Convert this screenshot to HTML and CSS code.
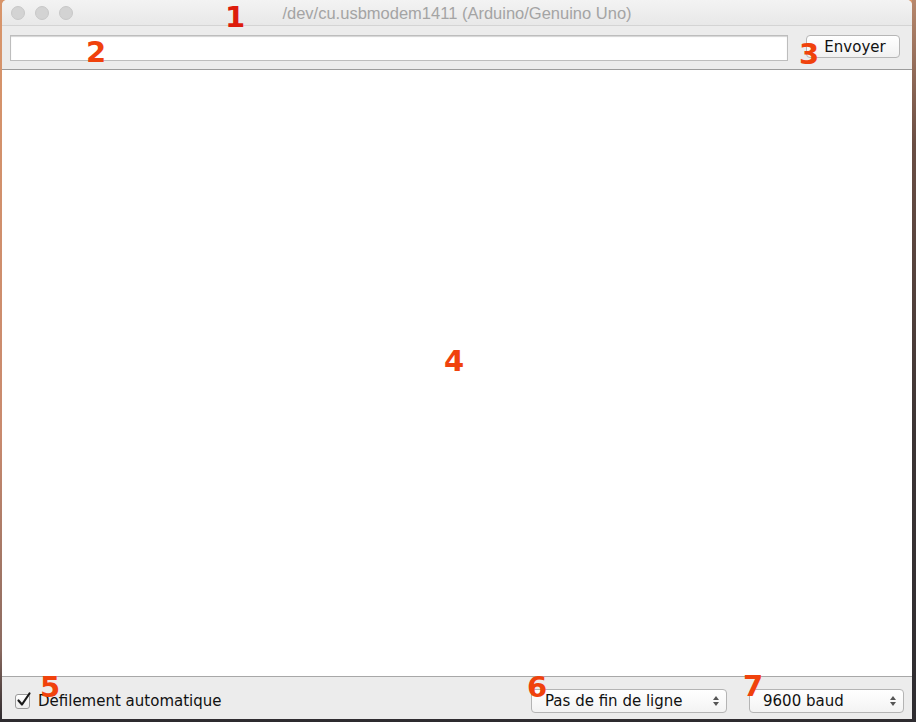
FILE: index.html
```html
<!DOCTYPE html>
<html lang="fr">
<head>
<meta charset="utf-8">
<title>Moniteur série</title>
<link rel="stylesheet" href="styles.css">
</head>
<body>
<div class="window">
  <div class="titlebar">
    <div class="lights">
      <span class="light"></span><span class="light"></span><span class="light"></span>
    </div>
    <div class="title">/dev/cu.usbmodem1411 (Arduino/Genuino Uno)</div>
    <div class="spacer"></div>
  </div>
  <div class="toolbar">
    <input class="send-input" type="text">
    <button class="send-btn">Envoyer</button>
  </div>
  <div class="output"></div>
  <div class="statusbar">
    <label class="autoscroll">
      <span class="checkbox">
        <svg width="18" height="18" viewBox="0 0 18 18"><path d="M3.5 9.5 L7 13.5 L14.5 2.5" fill="none" stroke="#1a1a1a" stroke-width="2.2" stroke-linecap="round" stroke-linejoin="round"/></svg>
      </span>
      <span>Défilement automatique</span>
    </label>
    <div class="spacer-grow"></div>
    <div class="select select-eol">
      <span>Pas de fin de ligne</span>
      <span class="arrows"><i class="up"></i><i class="down"></i></span>
    </div>
    <div class="select select-baud">
      <span>9600 baud</span>
      <span class="arrows"><i class="up"></i><i class="down"></i></span>
    </div>
  </div>
</div>

<span class="mark mark-1">1</span>
<span class="mark mark-2">2</span>
<span class="mark mark-3">3</span>
<span class="mark mark-4">4</span>
<span class="mark mark-5">5</span>
<span class="mark mark-6">6</span>
<span class="mark mark-7">7</span>
</body>
</html>
```
FILE: styles.css
```css
* { box-sizing: border-box; }
html, body {
  margin: 0;
  width: 916px;
  height: 722px;
  overflow: hidden;
}
body {
  position: relative;
  background: linear-gradient(180deg, #d8956a 0%, #c98a6e 60%, #8a6a60 90%, #2c2a2e 100%);
  font-family: "DejaVu Sans", "Liberation Sans", sans-serif;
}
body::after {
  content: "";
  position: absolute;
  right: 0;
  top: 0;
  width: 4px;
  height: 722px;
  background: linear-gradient(180deg, #b7876c 0%, #6a4e44 20%, #3c3434 60%, #2e2c30 100%);
}
.window {
  margin-left: 2px;
  width: 910px;
  height: 719px;
  background: #ececec;
  border-radius: 5px 5px 0 0;
  display: flex;
  flex-direction: column;
  overflow: hidden;
}
.titlebar {
  height: 26px;
  flex: none;
  display: grid;
  grid-template-columns: 1fr auto 1fr;
  align-items: center;
  background: linear-gradient(180deg, #f3f3f3, #e8e8e8);
  border-bottom: 1px solid #d4d4d4;
}
.lights {
  display: flex;
  gap: 10px;
  padding-left: 9px;
  padding-top: 1px;
}
.light {
  width: 14px;
  height: 14px;
  border-radius: 50%;
  background: #d3d3d3;
  border: 1px solid #c8c8c8;
}
.title {
  font-family: "Liberation Sans", Arial, sans-serif;
  font-size: 16.5px;
  color: #a4a4a4;
  padding-top: 1px;
  white-space: nowrap;
}
.toolbar {
  height: 44px;
  flex: none;
  display: flex;
  align-items: flex-start;
  padding: 9px 10px 0 8px;
  gap: 18px;
  background: #ececec;
  border-bottom: 1px solid #9c9c9c;
}
.send-input {
  width: 778px;
  height: 26px;
  margin: 0;
  border: 1px solid #bdbdbd;
  box-shadow: inset 0 1px 1px #d4d4d4;
  background: #fff;
  outline: none;
}
.send-btn {
  width: 94px;
  height: 23px;
  margin: 0;
  padding: 0 0 0 4px;
  border: 1px solid #b6b6b6;
  border-radius: 4px;
  background: linear-gradient(180deg, #ffffff, #f1f1f1);
  font-family: "DejaVu Sans", sans-serif;
  font-size: 15px;
  color: #111;
}
.output {
  flex: 1;
  background: #fff;
}
.statusbar {
  height: 43px;
  flex: none;
  display: flex;
  align-items: center;
  padding: 5px 8px 0 13px;
  border-top: 1px solid #a8a8a8;
  background: #ececec;
  font-size: 15px;
  color: #111;
}
.autoscroll {
  display: flex;
  align-items: center;
  gap: 8px;
}
.checkbox {
  position: relative;
  width: 15px;
  height: 15px;
  border: 1px solid #9a9a9a;
  border-radius: 3px;
  background: linear-gradient(180deg, #fff, #ededed);
  margin-top: 1px;
}
.checkbox svg {
  position: absolute;
  left: -1px;
  top: -4px;
}
.spacer-grow { flex: 1; }
.select {
  height: 24px;
  display: flex;
  align-items: center;
  justify-content: space-between;
  border: 1px solid #b4b4b4;
  border-radius: 4px;
  background: linear-gradient(180deg, #ffffff, #f3f3f3);
  padding: 0 7px 0 13px;
}
.select-eol { width: 196px; margin-right: 22px; }
.select-baud { width: 155px; }
.arrows {
  display: flex;
  flex-direction: column;
  gap: 2px;
}
.arrows i {
  display: block;
  width: 0;
  height: 0;
  border-left: 3.5px solid transparent;
  border-right: 3.5px solid transparent;
}
.arrows .up { border-bottom: 4px solid #555; }
.arrows .down { border-top: 4px solid #555; }
.mark {
  position: absolute;
  font-family: "DejaVu Sans", sans-serif;
  font-weight: bold;
  font-size: 29px;
  line-height: 1;
  color: #f0420c;
}
.mark-1 { left: 225px; top: 3px; color: #dd1c0c; }
.mark-2 { left: 86px; top: 38px; }
.mark-3 { left: 799px; top: 40px; }
.mark-4 { left: 444px; top: 347px; }
.mark-5 { left: 40px; top: 673px; }
.mark-6 { left: 527px; top: 673px; }
.mark-7 { left: 743px; top: 672px; }
```
